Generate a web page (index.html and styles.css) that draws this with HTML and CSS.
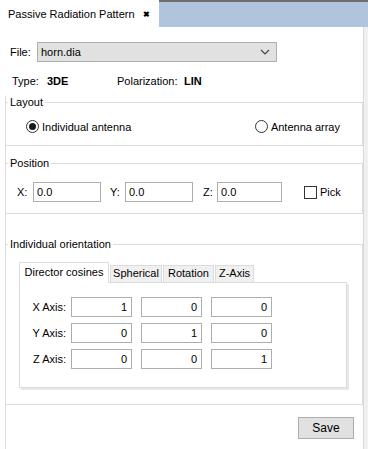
FILE: index.html
```html
<!DOCTYPE html>
<html lang="en">
<head>
    <meta charset="UTF-8">
    <title>Passive Radiation Pattern</title>
    <link rel="stylesheet" href="styles.css">
</head>
<body>
    <div class="panel">
        <div class="tabbar">
            <div class="doc-tab">
                <span>Passive Radiation Pattern</span>
                <span class="close">&#x2716;</span>
            </div>
            <div class="tabfill"></div>
        </div>

        <div class="file-row">
            <label class="file-label">File:</label>
            <div class="combo">
                <span>horn.dia</span>
                <svg width="10" height="6" viewBox="0 0 10 6"><path d="M1 1 L5 5 L9 1" fill="none" stroke="#444" stroke-width="1.2"/></svg>
            </div>
        </div>

        <div class="info-row">
            <span class="info-label type-label">Type:</span>
            <b class="type-value">3DE</b>
            <span class="info-label pol-label">Polarization:</span>
            <b>LIN</b>
        </div>

        <div class="groups">
            <fieldset class="group layout-group">
                <legend>Layout</legend>
                <div class="radio-row">
                    <label class="radio"><span class="radio-box checked"></span>Individual antenna</label>
                    <label class="radio"><span class="radio-box"></span>Antenna array</label>
                </div>
            </fieldset>

            <fieldset class="group position-group">
                <legend>Position</legend>
                <div class="pos-row">
                    <span class="pos-label lx">X:</span>
                    <div class="field wx">0.0</div>
                    <span class="pos-label ly">Y:</span>
                    <div class="field wy">0.0</div>
                    <span class="pos-label lz">Z:</span>
                    <div class="field wz">0.0</div>
                    <label class="check"><span class="check-box"></span>Pick</label>
                </div>
            </fieldset>

            <fieldset class="group orient-group">
                <legend>Individual orientation</legend>
                <div class="orient-body">
                    <div class="tabs">
                        <div class="tab active t1">Director cosines</div>
                        <div class="tab t2">Spherical</div>
                        <div class="tab t3">Rotation</div>
                        <div class="tab t4">Z-Axis</div>
                    </div>
                    <div class="tab-panel">
                        <div class="matrix">
                            <span class="axis">X Axis:</span>
                            <div class="field num">1</div>
                            <div class="field num">0</div>
                            <div class="field num">0</div>
                            <span class="axis">Y Axis:</span>
                            <div class="field num">0</div>
                            <div class="field num">1</div>
                            <div class="field num">0</div>
                            <span class="axis">Z Axis:</span>
                            <div class="field num">0</div>
                            <div class="field num">0</div>
                            <div class="field num">1</div>
                        </div>
                    </div>
                </div>
            </fieldset>

            <div class="actions">
                <button class="btn">Save</button>
            </div>
        </div>
    </div>
</body>
</html>
```

FILE: styles.css
```css
html, body {
    margin: 0;
    padding: 0;
    height: 100%;
}
body {
    font-family: "Liberation Sans", Arial, sans-serif;
    font-size: 11px;
    color: #000;
    background-color: #f0f0f0;
    overflow: hidden;
}
.panel {
    width: 363px;
    height: 449px;
    background-color: #fff;
    border-right: 1px solid #d9d9d9;
    display: flex;
    flex-direction: column;
}
.tabbar {
    display: flex;
    height: 28px;
}
.doc-tab {
    width: 159px;
    height: 28px;
    background-color: #fff;
    display: flex;
    align-items: center;
    padding-left: 8px;
    box-sizing: border-box;
}
.doc-tab .close {
    margin-left: 8px;
    font-size: 8px;
    font-weight: bold;
}
.tabfill {
    flex: 1;
    height: 25px;
    background-color: #b0c4de;
    border-top: 2px solid #6e6e6e;
    margin-right: -6px;
}
.file-row {
    display: flex;
    align-items: center;
    margin-top: 14px;
    padding-left: 10px;
}
.file-label {
    width: 27px;
}
.combo {
    width: 240px;
    height: 20px;
    box-sizing: border-box;
    background-color: #e1e1e1;
    border: 1px solid #adadad;
    display: flex;
    align-items: center;
    justify-content: space-between;
    padding: 0 6px 0 3px;
}
.info-row {
    display: flex;
    align-items: center;
    margin-top: 12px;
    height: 13px;
    padding-left: 12px;
}
.type-label {
    width: 35px;
}
.type-value {
    width: 70px;
}
.pol-label {
    width: 67px;
}
.groups {
    flex: 1;
    margin-left: 5px;
    margin-top: 9px;
    border-left: 1px solid #dcdcdc;
    display: flex;
    flex-direction: column;
}
.group {
    margin: 0;
    padding: 0;
    min-width: 0;
    border: 1px solid #dcdcdc;
    border-left: 0;
}
.group legend {
    margin-left: 2px;
    padding: 0 2px;
    line-height: 13px;
}
.layout-group {
    padding: 11px 0 12px 0;
}
.radio-row {
    display: flex;
    justify-content: space-between;
    padding: 0 22px 0 20px;
}
.radio, .check {
    display: flex;
    align-items: center;
    height: 13px;
}
.radio-box {
    width: 11px;
    height: 11px;
    border: 1px solid #333;
    border-radius: 50%;
    margin-right: 3px;
    display: flex;
    align-items: center;
    justify-content: center;
}
.radio-box.checked::after {
    content: "";
    width: 7px;
    height: 7px;
    border-radius: 50%;
    background-color: #1a1a1a;
}
.position-group {
    margin-top: 11px;
    padding: 12px 0 11px 0;
}
.pos-row {
    display: flex;
    align-items: center;
    padding-left: 11px;
}
.pos-label {
    width: 16px;
}
.ly { margin-left: 9px; width: 15px; }
.lz { margin-left: 10px; width: 14px; }
.field {
    height: 20px;
    box-sizing: border-box;
    border: 1px solid #adadad;
    background-color: #fff;
    line-height: 18px;
    padding: 0 4px 0 3px;
}
.wx, .wy { width: 68px; }
.wz { width: 65px; }
.check {
    margin-left: 22px;
}
.check-box {
    width: 13px;
    height: 13px;
    box-sizing: border-box;
    border: 1px solid #333;
    margin-right: 3px;
}
.orient-group {
    margin-top: 24px;
    padding: 11px 0 16px 0;
}
.orient-body {
    padding: 0 13px;
}
.tabs {
    display: flex;
    align-items: flex-end;
    height: 20px;
}
.tab {
    box-sizing: border-box;
    height: 17px;
    line-height: 15px;
    border: 1px solid #dcdcdc;
    border-bottom: 0;
    background-color: #f0f0f0;
    text-align: center;
    margin-right: 1px;
}
.tab.active {
    height: 21px;
    line-height: 19px;
    background-color: #fff;
    margin-bottom: -1px;
    position: relative;
}
.t1 { width: 90px; }
.t2 { width: 52px; }
.t3 { width: 51px; }
.t4 { width: 39px; }
.tab-panel {
    height: 106px;
    box-sizing: border-box;
    margin-right: 2px;
    border: 1px solid #dcdcdc;
    box-shadow: 2px 2px 0 #e8e8e8;
    padding-top: 14px;
}
.matrix {
    display: grid;
    grid-template-columns: 51px 70px 70px 61px;
    row-gap: 6px;
    align-items: center;
}
.axis {
    text-align: right;
    padding-right: 5px;
}
.field.num {
    width: 61px;
    text-align: right;
}
.actions {
    display: flex;
    justify-content: flex-end;
    margin-top: 12px;
    padding-right: 9px;
}
.btn {
    width: 56px;
    height: 22px;
    font-family: inherit;
    font-size: 12px;
    background-color: #e1e1e1;
    border: 1px solid #adadad;
    padding: 0;
}
```
